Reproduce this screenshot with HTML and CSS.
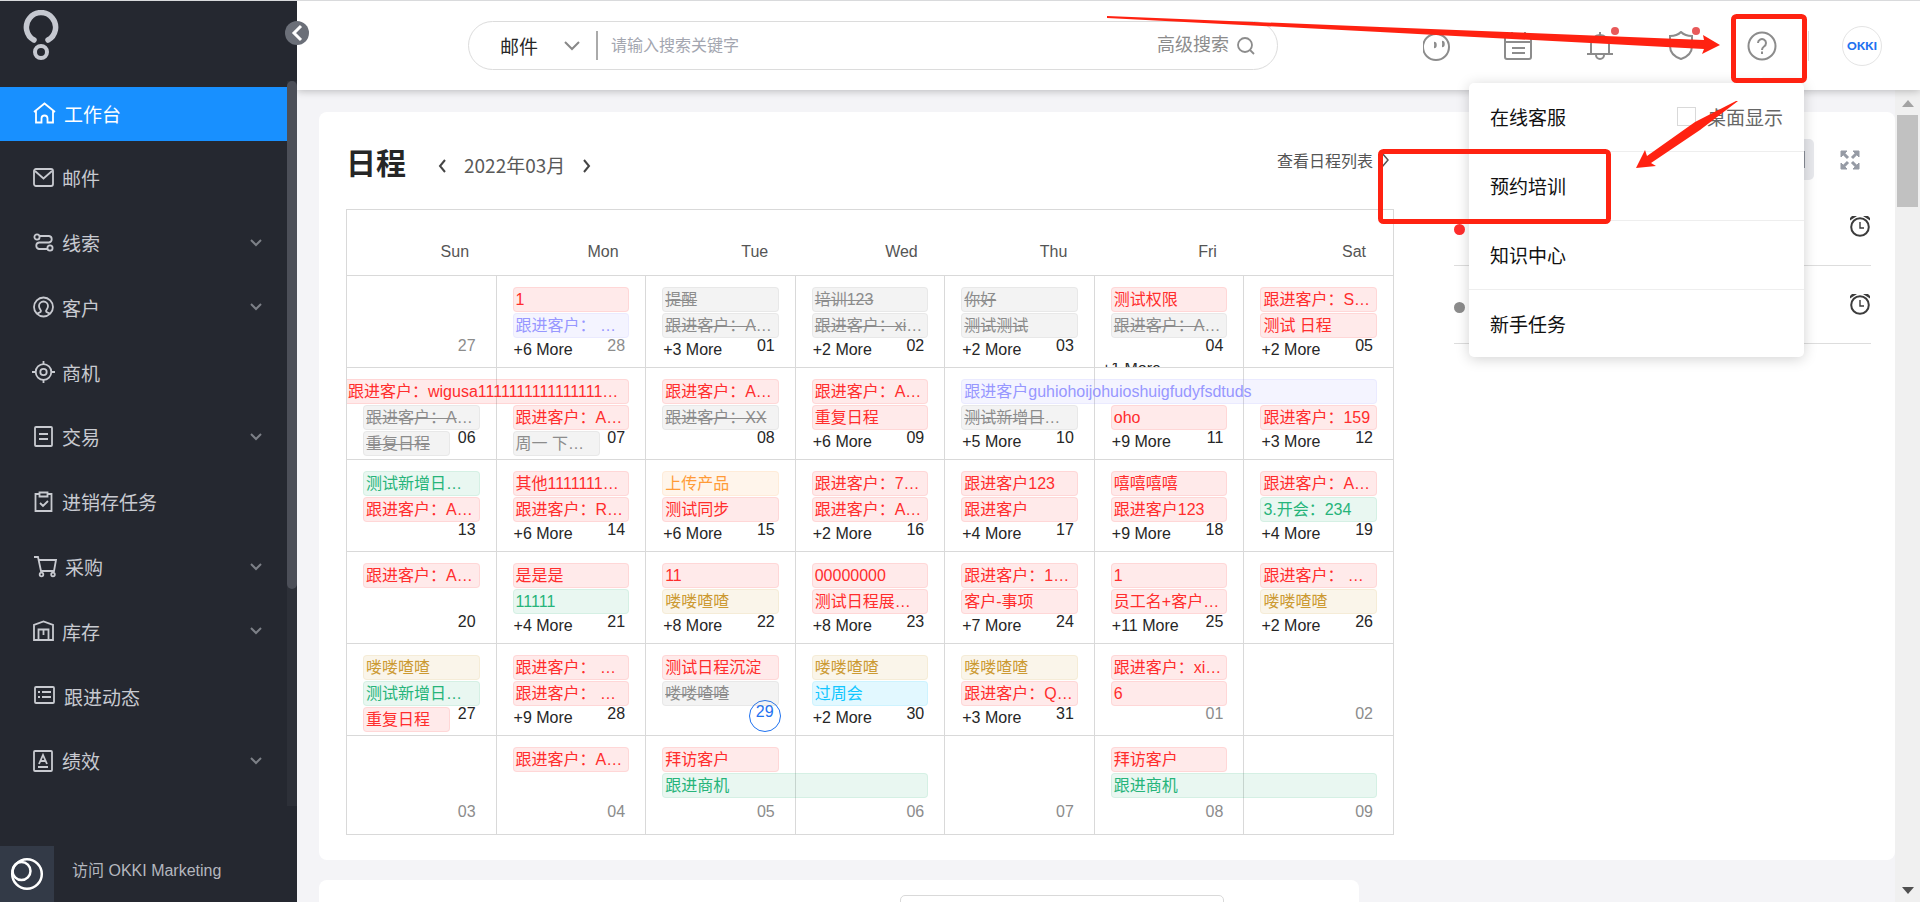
FILE: index.html
```html
<!DOCTYPE html>
<html lang="zh-CN">
<head>
  <meta charset="UTF-8">
  <meta name="viewport" content="width=device-width, initial-scale=1.0">
  <title>OKKI</title>
  <link rel="stylesheet" href="styles.css">
</head>
<body>
  <svg class="sprite" aria-hidden="true">
    <symbol id="down" viewBox="0 0 12 8"><path d="M1 1l5 5 5-5" fill="none" stroke="currentColor" stroke-width="2"/></symbol>
    <symbol id="clock" viewBox="0 0 22 22">
      <g fill="none" stroke="currentColor" stroke-width="2">
        <circle cx="11" cy="12" r="8.800"/>
        <path d="M11 7v6h4" stroke-width="1.400"/>
      </g>
      <path d="M1 5.500V3l2-2h5zM21 5.500V3l-2-2h-5z" fill="currentColor"/>
    </symbol>
  </svg>
  <div class="app">
    <!-- 侧边栏 -->
    <aside class="sidebar">
      <a class="logo" href="#" aria-label="OKKI">
        <svg width="36" height="50" viewBox="0 0 36 50" fill="none" stroke="#c5c8d0" stroke-linecap="round">
          <path d="M11 30a14.600 14.600 0 1 1 14 0" stroke-width="5.500"/>
          <circle cx="18" cy="42" r="6" stroke-width="4"/>
        </svg>
      </a>
      <button class="collapse" aria-label="收起">
        <svg width="12" height="18" viewBox="0 0 12 18"><path d="M10 2L3 9l7 7" fill="none" stroke="#fff" stroke-width="3"/></svg>
      </button>
      <nav class="nav">
        <ul class="menu">
          <li class="active"><a href="#">
            <svg width="23" height="22" viewBox="0 0 23 22"><path d="M1 10L11.500 1.500 22 10M3 9v11.500h5.500v-4a3 3 0 0 1 6 0v4H20V9"/></svg>工作台</a></li>
          <li><a href="#">
            <svg width="21" height="22" viewBox="0 0 21 22"><rect x="1" y="2" width="19" height="17" rx="2"/><path d="M2 4l8.500 7.500L19 4"/></svg>邮件</a></li>
          <li><a href="#">
            <svg width="21" height="22" viewBox="0 0 21 22"><circle cx="4" cy="5" r="2.600"/><circle cx="17" cy="16" r="2.600"/><path d="M7 4h9a3.300 3.300 0 0 1 0 6.500H6A3.300 3.300 0 0 0 6 17h8"/></svg>线索<svg class="arrow"><use href="#down"/></svg></a></li>
          <li><a href="#">
            <svg width="21" height="22" viewBox="0 0 21 22"><circle cx="10.500" cy="11" r="9.500"/><path d="M4 18c1-2 4-1 4-3 0-1-2-2-2-5a4.500 4.500 0 0 1 9 0c0 3-2 4-2 5 0 2 3 1 4 3"/></svg>客户<svg class="arrow"><use href="#down"/></svg></a></li>
          <li><a href="#">
            <svg width="21" height="22" viewBox="0 0 21 22"><circle cx="10.500" cy="11" r="7.800"/><circle cx="10.500" cy="11" r="3.200"/><path d="M10.500 0v4M10.500 18v4M-1 11h4M18 11h4"/></svg>商机</a></li>
          <li><a href="#">
            <svg width="21" height="22" viewBox="0 0 21 22"><rect x="2" y="1" width="17" height="19" rx="1"/><path d="M6 8h9M6 13h9"/></svg>交易<svg class="arrow"><use href="#down"/></svg></a></li>
          <li><a href="#">
            <svg width="21" height="22" viewBox="0 0 21 22"><path d="M6 3H2.500v17h16V3H15M6.500 1.500h8v4h-8zM7 12l3 3 5-5"/></svg>进销存任务</a></li>
          <li><a href="#">
            <svg width="24" height="22" viewBox="0 0 24 22"><path d="M1 1h4l3 14h13l2-11H6"/><circle cx="8.500" cy="18.500" r="1.800"/><circle cx="20" cy="18.500" r="1.800"/></svg>采购<svg class="arrow"><use href="#down"/></svg></a></li>
          <li><a href="#">
            <svg width="21" height="22" viewBox="0 0 21 22"><path d="M1 20V5l9.500-3.500L20 5v15zM5.500 20V9.500h10V20M10.500 10v5"/></svg>库存<svg class="arrow"><use href="#down"/></svg></a></li>
          <li><a href="#">
            <svg width="23" height="22" viewBox="0 0 23 22"><rect x="2" y="2" width="19" height="16" rx="1"/><path d="M5 7h2M9 7h9M5 12h2M9 12h9"/></svg>跟进动态</a></li>
          <li><a href="#">
            <svg width="21" height="22" viewBox="0 0 21 22"><rect x="1" y="1" width="18" height="20" rx="1"/><path d="M6 14l4-9 4 9M7.500 11h5M5 17h10"/></svg>绩效<svg class="arrow"><use href="#down"/></svg></a></li>
        </ul>
        <div class="track"><div class="thumb"></div></div>
      </nav>
      <a class="visit" href="#">
        <span class="visit-icon">
          <svg width="34" height="34" viewBox="0 0 34 34" fill="none" stroke="#fff" stroke-width="2.500"><circle cx="17" cy="17" r="14.800"/><circle cx="11.500" cy="14" r="9"/></svg>
        </span>
        <span class="visit-text">访问 OKKI Marketing</span>
      </a>
    </aside>

    <div class="main">
      <!-- 顶部栏 -->
      <header class="topbar">
        <form class="search">
          <button type="button" class="kind">邮件 <svg width="16" height="10" viewBox="0 0 16 10"><path d="M1 1l7 7 7-7" fill="none" stroke="#888" stroke-width="2"/></svg></button>
          <input class="keyword" type="text" placeholder="请输入搜索关键字" aria-label="搜索关键字">
          <a class="advanced" href="#">高级搜索</a>
          <button class="go" aria-label="搜索">
            <svg width="18" height="18" viewBox="0 0 18 18" fill="none" stroke="#8c8c8c" stroke-width="1.800"><circle cx="8" cy="8" r="7"/><path d="M13 13l4 4"/></svg>
          </button>
        </form>
        <div class="tools">
          <button class="tool" aria-label="助手">
            <svg width="30" height="30" viewBox="0 0 30 30"><circle cx="13" cy="16" r="13"/><path d="M11 12c2 0 2 4 0 4M19 11c2 0 2 4 0 4" stroke-width="2.500"/></svg>
          </button>
          <button class="tool" aria-label="日历">
            <svg width="30" height="30" viewBox="0 0 30 30"><rect x="1" y="5" width="26" height="23" rx="2"/><path d="M1 11h26M8 1v5M21 1v5M8 17h13M8 22h13"/></svg>
          </button>
          <button class="tool" aria-label="通知">
            <svg width="30" height="30" viewBox="0 0 30 30"><path d="M2 23h26M6 23V13a9 9 0 0 1 18 0v10M15 1v4M11 24a4 4 0 0 0 8 0"/></svg>
            <span class="badge"></span>
          </button>
          <button class="tool" aria-label="安全">
            <svg width="30" height="30" viewBox="0 0 30 30"><path d="M15 1c3 3 7 4 11 4v10c0 7-5 11-11 13C9 26 4 22 4 15V5c4 0 8-1 11-4z"/></svg>
            <span class="badge"></span>
          </button>
          <div class="help">
            <button class="tool" aria-label="帮助">
              <svg width="30" height="30" viewBox="0 0 30 30"><circle cx="15" cy="15" r="13.500"/><path d="M11 12a4 4 0 1 1 6 3.500c-1.500 1-2 1.500-2 3.500M15 20.500v2.500"/></svg>
            </button>
            <ul class="dropdown">
              <li><a href="#">在线客服</a><label class="desk"><input type="checkbox">桌面显示</label></li>
              <li><a href="#">预约培训</a></li>
              <li><a href="#">知识中心</a></li>
              <li><a href="#">新手任务</a></li>
            </ul>
          </div>
        </div>
        <a class="avatar" href="#">OKKI</a>
      </header>

      <div class="body">
        <div class="content">
          <section class="card schedule">
            <div class="left">
              <div class="head">
                <h1>日程</h1>
                <button class="step" aria-label="上个月"><svg width="8" height="14" viewBox="0 0 8 14"><path d="M7 1L2 7l5 6"/></svg></button>
                <span class="month">2022年03月</span>
                <button class="step" aria-label="下个月"><svg width="8" height="14" viewBox="0 0 8 14"><path d="M1 1l5 6-5 6"/></svg></button>
                <a class="list-link" href="#">查看日程列表 <svg width="9" height="16" viewBox="0 0 9 16"><path d="M1 1l6 7-6 7" fill="none" stroke="#555" stroke-width="1.500"/></svg></a>
              </div>
              <table class="calendar">
                <thead>
                  <tr><th>Sun</th><th>Mon</th><th>Tue</th><th>Wed</th><th>Thu</th><th>Fri</th><th>Sat</th></tr>
                </thead>
                <tbody>
                  <tr>
                    <td><div class="slot"></div><div class="slot"></div><div class="foot"><span class="day out">27</span></div></td>
                    <td><div class="slot red">1</div><div class="slot purple">跟进客户： …</div><div class="foot"><a href="#">+6 More</a><span class="day out">28</span></div></td>
                    <td><div class="slot gray"><s>提醒</s></div><div class="slot gray"><s>跟进客户：A</s>…</div><div class="foot"><a href="#">+3 More</a><span class="day">01</span></div></td>
                    <td><div class="slot gray"><s>培训123</s></div><div class="slot gray"><s>跟进客户：xi</s>…</div><div class="foot"><a href="#">+2 More</a><span class="day">02</span></div></td>
                    <td><div class="slot gray"><s>你好</s></div><div class="slot gray"><s>测试测试</s></div><div class="foot"><a href="#">+2 More</a><span class="day">03</span></div></td>
                    <td><div class="slot red">测试权限</div><div class="slot gray"><s>跟进客户：A</s>…</div><div class="foot"><span class="day">04</span></div><div class="cut"><a href="#">+1 More</a></div></td>
                    <td><div class="slot red">跟进客户：S…</div><div class="slot red">测试 日程</div><div class="foot"><a href="#">+2 More</a><span class="day">05</span></div></td>
                  </tr>
                  <tr>
                    <td><div class="slot red span2 from-prev">跟进客户：wigusa1111111111111111…</div><div class="slot gray"><s>跟进客户：A</s>…</div><div class="foot"><div class="slot short gray"><s>重复日程</s></div><span class="day">06</span></div></td>
                    <td><div class="slot"></div><div class="slot red">跟进客户：A…</div><div class="foot"><div class="slot short gray">周一 下…</div><span class="day">07</span></div></td>
                    <td><div class="slot red">跟进客户：A…</div><div class="slot gray"><s>跟进客户：XX</s></div><div class="foot"><span class="day">08</span></div></td>
                    <td><div class="slot red">跟进客户：A…</div><div class="slot red">重复日程</div><div class="foot"><a href="#">+6 More</a><span class="day">09</span></div></td>
                    <td><div class="slot purple span3">跟进客户guhiohoijohuioshuigfudyfsdtuds</div><div class="slot gray"><s>测试新增日</s>…</div><div class="foot"><a href="#">+5 More</a><span class="day">10</span></div></td>
                    <td><div class="slot"></div><div class="slot red">oho</div><div class="foot"><a href="#">+9 More</a><span class="day">11</span></div></td>
                    <td><div class="slot"></div><div class="slot red">跟进客户：159</div><div class="foot"><a href="#">+3 More</a><span class="day">12</span></div></td>
                  </tr>
                  <tr>
                    <td><div class="slot green">测试新增日…</div><div class="slot red">跟进客户：A…</div><div class="foot"><span class="day">13</span></div></td>
                    <td><div class="slot red">其他1111111…</div><div class="slot red">跟进客户：R…</div><div class="foot"><a href="#">+6 More</a><span class="day">14</span></div></td>
                    <td><div class="slot orange">上传产品</div><div class="slot red">测试同步</div><div class="foot"><a href="#">+6 More</a><span class="day">15</span></div></td>
                    <td><div class="slot red">跟进客户：7…</div><div class="slot red">跟进客户：A…</div><div class="foot"><a href="#">+2 More</a><span class="day">16</span></div></td>
                    <td><div class="slot red">跟进客户123</div><div class="slot red">跟进客户</div><div class="foot"><a href="#">+4 More</a><span class="day">17</span></div></td>
                    <td><div class="slot red">嘻嘻嘻嘻</div><div class="slot red">跟进客户123</div><div class="foot"><a href="#">+9 More</a><span class="day">18</span></div></td>
                    <td><div class="slot red">跟进客户：A…</div><div class="slot green">3.开会：234</div><div class="foot"><a href="#">+4 More</a><span class="day">19</span></div></td>
                  </tr>
                  <tr>
                    <td><div class="slot red">跟进客户：A…</div><div class="slot"></div><div class="foot"><span class="day">20</span></div></td>
                    <td><div class="slot red">是是是</div><div class="slot green">11111</div><div class="foot"><a href="#">+4 More</a><span class="day">21</span></div></td>
                    <td><div class="slot red">11</div><div class="slot brown">喽喽喳喳</div><div class="foot"><a href="#">+8 More</a><span class="day">22</span></div></td>
                    <td><div class="slot red">00000000</div><div class="slot red">测试日程展…</div><div class="foot"><a href="#">+8 More</a><span class="day">23</span></div></td>
                    <td><div class="slot red">跟进客户：1…</div><div class="slot red">客户-事项</div><div class="foot"><a href="#">+7 More</a><span class="day">24</span></div></td>
                    <td><div class="slot red">1</div><div class="slot red">员工名+客户…</div><div class="foot"><a href="#">+11 More</a><span class="day">25</span></div></td>
                    <td><div class="slot red">跟进客户： …</div><div class="slot brown">喽喽喳喳</div><div class="foot"><a href="#">+2 More</a><span class="day">26</span></div></td>
                  </tr>
                  <tr>
                    <td><div class="slot brown">喽喽喳喳</div><div class="slot green">测试新增日…</div><div class="foot"><div class="slot short red">重复日程</div><span class="day">27</span></div></td>
                    <td><div class="slot red">跟进客户： …</div><div class="slot red">跟进客户： …</div><div class="foot"><a href="#">+9 More</a><span class="day">28</span></div></td>
                    <td><div class="slot red">测试日程沉淀</div><div class="slot gray"><s>喽喽喳喳</s></div><div class="foot"><span class="day today">29</span></div></td>
                    <td><div class="slot brown">喽喽喳喳</div><div class="slot cyan">过周会</div><div class="foot"><a href="#">+2 More</a><span class="day">30</span></div></td>
                    <td><div class="slot brown">喽喽喳喳</div><div class="slot red">跟进客户：Q…</div><div class="foot"><a href="#">+3 More</a><span class="day">31</span></div></td>
                    <td><div class="slot red">跟进客户：xi…</div><div class="slot red">6</div><div class="foot"><span class="day out">01</span></div></td>
                    <td><div class="slot"></div><div class="slot"></div><div class="foot"><span class="day out">02</span></div></td>
                  </tr>
                  <tr class="last">
                    <td><div class="slot"></div><div class="slot"></div><div class="foot"><span class="day out">03</span></div></td>
                    <td><div class="slot red">跟进客户：A…</div><div class="slot"></div><div class="foot"><span class="day out">04</span></div></td>
                    <td><div class="slot red">拜访客户</div><div class="slot green span2">跟进商机</div><div class="foot"><span class="day out">05</span></div></td>
                    <td><div class="slot"></div><div class="slot"></div><div class="foot"><span class="day out">06</span></div></td>
                    <td><div class="slot"></div><div class="slot"></div><div class="foot"><span class="day out">07</span></div></td>
                    <td><div class="slot red">拜访客户</div><div class="slot green span2">跟进商机</div><div class="foot"><span class="day out">08</span></div></td>
                    <td><div class="slot"></div><div class="slot"></div><div class="foot"><span class="day out">09</span></div></td>
                  </tr>
                </tbody>
              </table>
            </div>
            <div class="right">
              <div class="right-head">
                <button class="toggle" aria-label="切换视图"><svg width="20" height="20" viewBox="0 0 20 20"><rect x="2" y="2" width="16" height="15" fill="none" stroke="#8b8f99" stroke-width="2"/></svg></button>
                <button class="full" aria-label="全屏">
                  <svg width="20" height="20" viewBox="0 0 20 20" fill="#969ba5" stroke="#969ba5"><path d="M1 1h6L1 7zM19 1v6l-6-6zM1 19v-6l6 6zM19 19h-6l6-6z"/><path d="M3 3l5 5M17 3l-5 5M3 17l5-5M17 17l-5-5" stroke-width="3"/></svg>
                </button>
              </div>
              <ul class="todo">
                <li><span class="dot dot-red"></span><svg width="22" height="22"><use href="#clock"/></svg></li>
                <li><span class="dot"></span><svg width="22" height="22"><use href="#clock"/></svg></li>
              </ul>
            </div>
          </section>
          <section class="card second"><button class="picker" aria-label="选择"></button></section>
        </div>
        <div class="scrollbar">
          <svg width="12" height="7" viewBox="0 0 12 7"><path d="M0 7l6-7 6 7z" fill="#a3a3a3"/></svg>
          <div class="bar"></div>
          <svg width="12" height="7" viewBox="0 0 12 7"><path d="M0 0l6 7 6-7z" fill="#505050"/></svg>
        </div>
      </div>
    </div>
  </div>

  <!-- 操作指引 -->
  <svg class="guide" width="1920" height="902" viewBox="0 0 1920 902" aria-hidden="true">
    <g fill="none" stroke="#ff2211" stroke-width="5">
      <rect x="1733.500" y="16.500" width="71" height="64" rx="3"/>
      <rect x="1380.500" y="151.500" width="228" height="70" rx="3"/>
    </g>
    <path fill="#ff2211" d="M1107 16L1380 27 1704 40 1703 35 1720 45 1702 54 1704 49 1380 32 1107 18z"/>
    <path fill="#ff2211" d="M1738 101L1700 130 1651 163 1656 166 1636 168 1645 150 1647 156 1695 122 1736 101z"/>
  </svg>
</body>
</html>
```
FILE: styles.css
```css
*{
  box-sizing: border-box;
}
body{
  margin: 0;
  font-family: "Liberation Sans", "Noto Sans CJK SC", sans-serif;
  font-size: 16px;
  color: #262626;
  background-color: #f4f4f7;
}
ul{
  list-style: none;
  margin: 0;
  padding: 0;
}
a{
  color: inherit;
  text-decoration: none;
}
button{
  font: inherit;
  color: inherit;
  background: none;
  border: none;
  padding: 0;
}
svg{
  display: block;
  flex: none;
}
.sprite{
  position: absolute;
  width: 0;
  height: 0;
}
.app{
  display: flex;
  height: 100vh;
  border-top: 1px solid #d9dadc;
  overflow: hidden;
}
/* 侧边栏 */
.sidebar{
  position: relative;
  z-index: 3;
  flex: none;
  width: 297px;
  display: flex;
  flex-direction: column;
  background-color: #252830;
}
.logo{
  height: 80px;
  padding: 9px 0 0 23px;
}
.collapse{
  position: absolute;
  top: 20px;
  right: -12px;
  width: 24px;
  height: 24px;
  border-radius: 50%;
  background-color: #6b6f78;
  display: flex;
  align-items: center;
  justify-content: center;
}
.nav{
  flex: 1;
  display: flex;
  margin-bottom: 40px;
}
.menu{
  flex: 1;
  display: flex;
  flex-direction: column;
  justify-content: space-between;
  padding: 6px 0 17px;
  font-size: 19px;
  color: #c8cad0;
}
.menu a{
  display: flex;
  align-items: center;
  gap: 8px;
  height: 54px;
  padding: 0 25px 2px 33px;
}
.menu a svg{
  fill: none;
  stroke: currentColor;
  stroke-width: 1.8;
  overflow: visible;
}
.menu .active{
  background-color: #1890ff;
  color: #fff;
}
.menu .arrow{
  width: 12px;
  height: 8px;
  margin-left: auto;
  color: #7d8087;
}
.track{
  width: 10px;
  background-color: #2d3038;
}
.thumb{
  height: 70%;
  border-radius: 5px;
  background-color: #4c4f58;
}
.visit{
  display: flex;
  height: 56px;
  color: #b4b7bf;
}
.visit-icon{
  width: 54px;
  display: flex;
  align-items: center;
  justify-content: center;
  background-color: #333a47;
}
.visit-text{
  padding-left: 18px;
  line-height: 49px;
}
.main{
  flex: 1;
  min-width: 0;
  display: flex;
  flex-direction: column;
}
/* 顶部栏 */
.topbar{
  position: relative;
  z-index: 2;
  flex: none;
  display: flex;
  align-items: center;
  height: 89px;
  padding: 0 38px 0 171px;
  background-color: #fff;
  box-shadow: 0 1px 8px rgba(0,0,0,0.25);
}
.search{
  flex: 0 1 810px;
  display: flex;
  align-items: center;
  height: 49px;
  padding: 0 22px 0 31px;
  border: 1px solid #dcdcdc;
  border-radius: 25px;
}
.kind{
  display: flex;
  align-items: center;
  justify-content: space-between;
  width: 98px;
  height: 29px;
  padding-right: 16px;
  border-right: 2px solid #aaa;
  font-size: 19px;
}
.keyword{
  flex: 1;
  min-width: 0;
  border: none;
  outline: none;
  padding: 0 13px;
  font: inherit;
}
.keyword::placeholder{
  color: #a3a6b0;
}
.advanced{
  font-size: 18px;
  line-height: 24px;
  padding-bottom: 2px;
  color: #8c8c8c;
  margin-right: 8px;
}
.tools{
  display: flex;
  align-items: center;
  gap: 51px;
  margin-left: auto;
  padding-right: 31px;
  border-right: 1px solid #ddd;
}
.tool{
  position: relative;
  display: block;
}
.tool svg{
  fill: none;
  stroke: #8c8c8c;
  stroke-width: 2;
}
.badge{
  position: absolute;
  top: -4px;
  right: -4px;
  width: 8px;
  height: 8px;
  border-radius: 50%;
  background-color: #e85a5a;
}
.avatar{
  width: 40px;
  height: 40px;
  margin-left: 33px;
  border: 1px solid #e4e4e4;
  border-radius: 50%;
  font-family: Lato, sans-serif;
  font-size: 12px;
  font-weight: 900;
  line-height: 38px;
  text-align: center;
  color: #1f72f0;
}
/* 帮助菜单 */
.help{
  position: relative;
}
.dropdown{
  position: absolute;
  top: 52px;
  right: -27px;
  width: 335px;
  border-radius: 5px;
  background-color: #fff;
  box-shadow: 0 2px 14px rgba(0,0,0,0.18);
  font-size: 19px;
  color: #111;
}
.dropdown::before{
  content: "";
  position: absolute;
  top: -5px;
  right: 38px;
  width: 10px;
  height: 10px;
  background-color: #fff;
  transform: rotate(45deg);
}
.dropdown li{
  display: flex;
  align-items: center;
  justify-content: space-between;
  height: 69px;
  padding: 0 21px;
  border-bottom: 1px solid #eee;
}
.dropdown li:last-child{
  height: 67px;
  border-bottom: none;
}
.desk{
  display: flex;
  align-items: center;
  gap: 11px;
  color: #666;
}
.desk input{
  appearance: none;
  width: 19px;
  height: 19px;
  margin: 0;
  border: 1px solid #d9d9d9;
  background-color: #fff;
}
/* 内容区 */
.body{
  flex: 1;
  min-height: 0;
  display: flex;
}
.content{
  flex: 1;
  min-width: 0;
  overflow: hidden;
  padding: 22px 0 0 22px;
}
.card{
  border-radius: 8px;
  background-color: #fff;
}
.schedule{
  display: flex;
  gap: 60px;
  padding: 27px 24px 25px 27px;
}
.left{
  flex: 1;
  min-width: 0;
}
.head{
  display: flex;
  align-items: center;
  height: 50px;
  margin-bottom: 20px;
}
h1{
  margin: 0 32px 0 0;
  font-size: 30px;
  line-height: 40px;
}
.step{
  padding-top: 4px;
}
.step svg{
  fill: none;
  stroke: #444;
  stroke-width: 2;
}
.month{
  margin: 0 18px;
  font-family: "Noto Sans CJK SC", sans-serif;
  font-size: 19px;
  color: #595959;
}
.list-link{
  display: flex;
  align-items: center;
  gap: 8px;
  margin: 0 4px 8px auto;
  color: #555;
}
/* 日历 */
.calendar{
  width: 100%;
  table-layout: fixed;
  border-collapse: collapse;
  border: 1px solid #d9d9d9;
}
.calendar th{
  height: 66px;
  padding: 18px 27px 0 0;
  font-weight: normal;
  text-align: right;
  color: #555;
}
.calendar td{
  position: relative;
  height: 92px;
  padding: 11px 16px 0 16px;
  border: 1px solid #d9d9d9;
  vertical-align: top;
}
.calendar .last td{
  height: 99px;
}
.slot{
  position: relative;
  z-index: 1;
  height: 25px;
  margin-bottom: 1px;
  padding: 0 2px;
  border: 1px solid transparent;
  border-radius: 4px;
  line-height: 23px;
  white-space: nowrap;
}
.red{
  color: #ff2d2d;
  background-color: rgba(255,45,45,0.1);
  border-color: rgba(255,45,45,0.1);
}
.purple{
  color: #9797ff;
  background-color: rgba(151,151,255,0.1);
  border-color: rgba(151,151,255,0.1);
}
.gray{
  color: #8c8c8c;
  background-color: rgba(140,140,140,0.1);
  border-color: rgba(140,140,140,0.1);
}
.green{
  color: #26b47a;
  background-color: rgba(38,180,122,0.1);
  border-color: rgba(38,180,122,0.1);
}
.orange{
  color: #ff9b37;
  background-color: rgba(255,155,55,0.1);
  border-color: rgba(255,155,55,0.1);
}
.brown{
  color: #cc9a33;
  background-color: rgba(204,154,51,0.1);
  border-color: rgba(204,154,51,0.1);
}
.cyan{
  color: #12c6ff;
  background-color: rgba(18,198,255,0.12);
  border-color: rgba(18,198,255,0.1);
}
.span2{
  width: calc(200% + 33px);
}
.span3{
  width: calc(300% + 66px);
}
.from-prev{
  width: calc(200% + 49px);
  margin-left: -16px;
  padding-left: 1px;
  border-left: none;
  border-radius: 0 4px 4px 0;
}
.foot{
  display: flex;
  height: 26px;
  line-height: 18px;
}
.foot a{
  padding: 2px 0 0 1px;
}
.short{
  width: 87px;
}
.day{
  margin: -2px 4px 0 auto;
}
.out{
  color: #8c8c8c;
}
.last .foot{
  padding-top: 6px;
}
.today{
  width: 32px;
  height: 32px;
  margin: -7px -2px 0 auto;
  border: 1px solid #1f72f0;
  border-radius: 50%;
  line-height: 22px;
  text-align: center;
  color: #1f72f0;
}
.cut{
  position: absolute;
  left: 7px;
  bottom: 0;
  height: 4px;
  overflow: hidden;
  line-height: 12px;
}
/* 右侧列表 */
.right{
  flex: none;
  width: 417px;
}
.right-head{
  display: flex;
  align-items: center;
  justify-content: flex-end;
  gap: 26px;
  padding-right: 11px;
}
.toggle{
  width: 42px;
  height: 41px;
  padding-left: 14px;
  border-radius: 5px;
  background-color: #e8e9ed;
}
.todo{
  padding-top: 8px;
}
.todo li{
  display: flex;
  align-items: center;
  justify-content: space-between;
  height: 78px;
  padding-bottom: 2px;
  border-bottom: 1px solid #ddd;
  color: #3c3c3c;
}
.dot{
  width: 11px;
  height: 11px;
  margin-top: 8px;
  border-radius: 50%;
  background-color: #8c8c8c;
}
.dot-red{
  background-color: #ff2d2d;
}
.second{
  width: 66%;
  height: 200px;
  margin-top: 20px;
  padding: 15px 135px;
}
.picker{
  display: block;
  width: 324px;
  height: 40px;
  margin-left: auto;
  border: 1px solid #d9d9d9;
  border-radius: 5px;
}
.scrollbar{
  flex: none;
  width: 25px;
  display: flex;
  flex-direction: column;
  align-items: center;
  padding: 10px 0 8px;
  background-color: #f0f0f0;
}
.bar{
  width: 21px;
  height: 92px;
  margin: 8px 0 auto;
  background-color: #c1c1c1;
}
.guide{
  position: absolute;
  top: 0;
  left: 0;
  z-index: 5;
  pointer-events: none;
}
```
